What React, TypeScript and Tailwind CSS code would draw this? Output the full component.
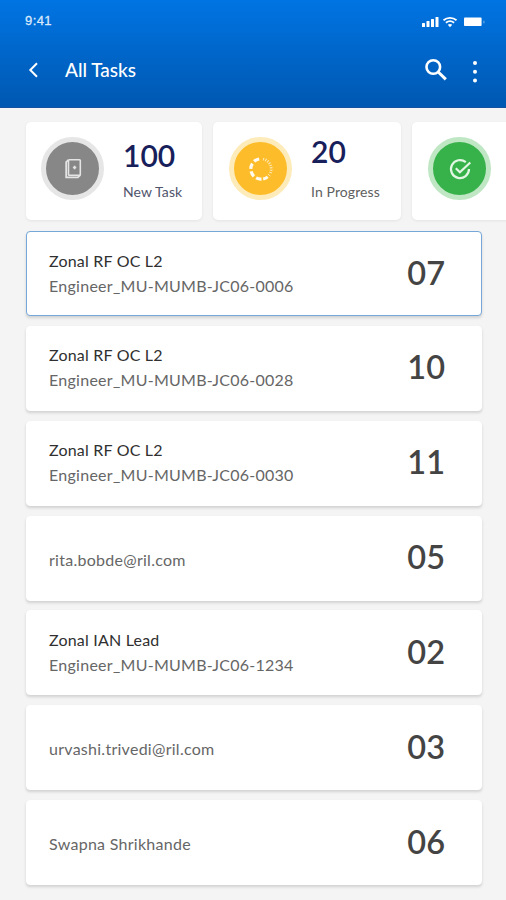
import type { ReactNode } from "react";
import clsx from "clsx";

interface Task {
  title?: string;
  assignee: string;
  count: string;
}

const tasks: Task[] = [
  { title: "Zonal RF OC L2", assignee: "Engineer_MU-MUMB-JC06-0006", count: "07" },
  { title: "Zonal RF OC L2", assignee: "Engineer_MU-MUMB-JC06-0028", count: "10" },
  { title: "Zonal RF OC L2", assignee: "Engineer_MU-MUMB-JC06-0030", count: "11" },
  { assignee: "rita.bobde@ril.com", count: "05" },
  { title: "Zonal IAN Lead", assignee: "Engineer_MU-MUMB-JC06-1234", count: "02" },
  { assignee: "urvashi.trivedi@ril.com", count: "03" },
  { assignee: "Swapna Shrikhande", count: "06" },
];

function StatusBar() {
  return (
    <div className="flex h-[41px] items-center justify-between pl-[25px] pr-[21px] text-white">
      <span className="font-['Liberation_Sans',sans-serif] text-[13px] tracking-[0.4px] text-[#dbe9fb] [-webkit-text-stroke:0.3px_#dbe9fb]">9:41</span>
      <svg width="64" height="14" viewBox="0 0 64 14" fill="currentColor" className="mt-[2px]">
        <rect x="1" y="8" width="3" height="4" rx="0.5" />
        <rect x="5.5" y="6" width="3" height="6" rx="0.5" />
        <rect x="10" y="4" width="3" height="8" rx="0.5" />
        <rect x="14.5" y="2" width="3" height="10" rx="0.5" />
        <path d="M22.5 5.2a10 10 0 0 1 13 0M24.9 7.8a6.5 6.5 0 0 1 8.2 0" fill="none" stroke="currentColor" strokeWidth="1.8" />
        <path d="M26.8 9.8a3.6 3.6 0 0 1 4.4 0L29 12.3z" />
        <rect x="43" y="2.6" width="17.6" height="8.4" rx="0.8" />
        <rect x="62.3" y="5.4" width="1.2" height="3" rx="0.6" opacity="0.4" />
      </svg>
    </div>
  );
}

function Header() {
  return (
    <header className="h-[108px] border-b border-[#1252a0] bg-linear-to-b from-[#0074e3] to-[#0058b1]">
      <StatusBar />
      <div className="flex h-[58px] items-center pl-[27px] pr-7 text-white">
        <svg width="12" height="16" viewBox="0 0 12 16" fill="none" stroke="currentColor" strokeWidth="2">
          <path d="M10 1.3 3.3 8l6.7 6.7" />
        </svg>
        <h1 className="ml-[26px] text-[19px] font-medium">All Tasks</h1>
        <svg width="24" height="24" viewBox="0 0 24 24" fill="none" stroke="currentColor" className="ml-auto">
          <circle cx="9.3" cy="9" r="6.8" strokeWidth="2.6" />
          <path d="m14 13.8 7.8 7.6" strokeWidth="3" />
        </svg>
        <svg width="6" height="24" viewBox="0 0 6 24" fill="currentColor" className="ml-6 mt-1">
          <circle cx="3" cy="3" r="2" />
          <circle cx="3" cy="11.7" r="2" />
          <circle cx="3" cy="20.4" r="2" />
        </svg>
      </div>
    </header>
  );
}

interface StatCardProps {
  className?: string;
  iconClassName: string;
  icon: ReactNode;
  children?: ReactNode;
}

function StatCard({ className, iconClassName, icon, children }: StatCardProps) {
  return (
    <div className={clsx("flex h-[98px] shrink-0 rounded-[5px] bg-white pt-[15px] shadow-[0_1px_3px_rgba(0,0,0,0.07)]", className)}>
      <div className={clsx("flex size-[63px] shrink-0 items-center justify-center rounded-full border-[5.5px]", iconClassName)}>
        {icon}
      </div>
      {children}
    </div>
  );
}

function Stats() {
  return (
    <section className="flex gap-[11px] overflow-hidden pb-[11px] pl-[26px] pt-[14px]">
      <StatCard
        className="w-[176px] pl-[15px]"
        iconClassName="border-[#e6e6e6] bg-[#878787]"
        icon={
          <svg width="18" height="22" viewBox="0 0 18 22" fill="none" stroke="#e4e4e4">
            <rect x="4.5" y="1.8" width="11.8" height="15.4" rx="0.8" strokeWidth="1.6" />
            <path d="M4.4 1.9 2.2 4.2v15.2h11.6l2.4-2.2" strokeWidth="1.8" />
            <path d="M8.9 9.5h3.4M10.6 7.8v3.4" strokeWidth="1.7" />
          </svg>
        }
      >
        <div className="ml-[19px] pt-[2px]">
          <div className="text-[30px] font-semibold leading-8 text-[#17205a]">100</div>
          <div className="mt-[11px] text-[14px] leading-5 tracking-[0.1px] text-[#50546c]">New Task</div>
        </div>
      </StatCard>
      <StatCard
        className="w-[188px] pl-4"
        iconClassName="border-[#feebba] bg-[#fdbd2b]"
        icon={
          <svg width="26" height="26" viewBox="0 0 26 26" fill="none" stroke="#fffaf0">
            <path d="M13.5 23.2A10.2 10.2 0 0 1 12.5 2.8" strokeWidth="3.2" strokeDasharray="5.6 2.7" />
            <path d="M15.2 23a10.2 10.2 0 0 0 6.2-4" strokeWidth="3" strokeDasharray="5 2" />
            <path d="M22.4 17A10.2 10.2 0 0 0 14.3 2.9" strokeWidth="2.8" strokeDasharray="1 1.4" opacity="0.75" />
          </svg>
        }
      >
        <div className="ml-[19px] -mt-[2px]">
          <div className="text-[30px] font-semibold leading-8 text-[#17205a]">20</div>
          <div className="mt-[15px] text-[14px] leading-5 tracking-[0.1px] text-[#606060]">In Progress</div>
        </div>
      </StatCard>
      <StatCard
        className="w-[180px] pl-4"
        iconClassName="border-[#bfe7c4] bg-[#37b24a]"
        icon={
          <svg width="24" height="24" viewBox="0 0 24 24" fill="none" stroke="#e2f7e3" strokeWidth="2.2">
            <path d="M17.8 5.2A9 9 0 1 0 21 12" />
            <path d="m7.8 11.2 4.1 4.1L22.3 5.5" />
          </svg>
        }
      />
    </section>
  );
}

function TaskCard({ task, selected }: { task: Task; selected?: boolean }) {
  return (
    <li
      className={clsx(
        "flex h-[85px] items-center justify-between rounded-[4px] border bg-white pl-[22px] pr-9 shadow-[0_2px_3px_rgba(0,0,0,0.14)]",
        selected ? "border-[#75a7d8]" : "border-white"
      )}
    >
      <div className="text-[16px] leading-[25px]">
        {task.title && <p className="tracking-[0.2px] text-[#303030]">{task.title}</p>}
        <p className={clsx("tracking-[0.27px] text-[#666]", task.title ? "pb-[2px]" : "pt-[2px]")}>{task.assignee}</p>
      </div>
      <span className="pb-[2px] text-[32.5px] font-semibold leading-10 text-[#444]">{task.count}</span>
    </li>
  );
}

export default function App() {
  return (
    <div className="h-[900px] w-[506px] overflow-hidden bg-[#f4f4f4] font-[Lato,sans-serif]">
      <Header />
      <Stats />
      <ul className="flex flex-col gap-[9.85px] pl-[26px] pr-6">
        {tasks.map((task, i) => (
          <TaskCard key={task.assignee} task={task} selected={i === 0} />
        ))}
      </ul>
    </div>
  );
}
